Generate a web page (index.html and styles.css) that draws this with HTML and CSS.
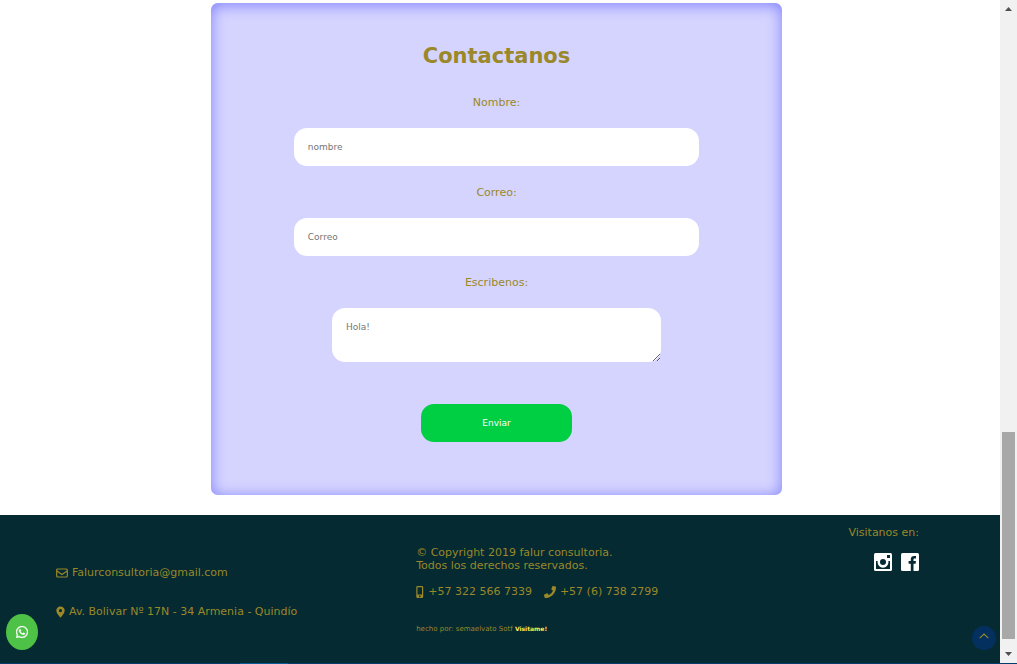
FILE: index.html
```html
<!DOCTYPE html>
<html lang="es">
<head>
  <meta charset="utf-8">
  <meta name="viewport" content="width=device-width, initial-scale=1">
  <title>Falur consultoria</title>
  <link rel="stylesheet" href="styles.css">
</head>
<body>
  <div class="window">
    <div class="page">
      <main class="content">
        <form class="contact">
          <h2 class="contact-title">Contactanos</h2>
          <label class="label" for="nombre">Nombre:</label>
          <input class="field" id="nombre" type="text" placeholder="nombre">
          <label class="label" for="correo">Correo:</label>
          <input class="field" id="correo" type="email" placeholder="Correo">
          <label class="label" for="mensaje">Escribenos:</label>
          <textarea class="field message" id="mensaje" placeholder="Hola!"></textarea>
          <button class="send" type="submit">Enviar</button>
        </form>
      </main>
      <footer class="footer">
        <address class="col place">
          <p class="line"><svg class="icon" width="12" height="12" viewBox="0 0 12 12" aria-hidden="true"><rect x="0.7" y="2" width="10.6" height="8" rx="1" fill="none" stroke="currentColor" stroke-width="1.2"/><path d="M1 4l5 3.6L11 4" fill="none" stroke="currentColor" stroke-width="1.2"/></svg>Falurconsultoria@gmail.com</p>
          <p class="line"><svg class="icon" width="9" height="12" viewBox="0 0 9 12" aria-hidden="true"><path fill="currentColor" fill-rule="evenodd" d="M4.5 0.5A4 4 0 0 1 8.7 4.6C8.7 7 6.8 8.800 4.500 11.800C2.200 8.800 0.300 7 0.300 4.600A4 4 0 0 1 4.500 0.500ZM4.500 3a1.600 1.600 0 1 0 0 3.200a1.600 1.600 0 0 0 0-3.200Z"/></svg>Av. Bolivar Nº 17N - 34 Armenia - Quindío</p>
        </address>
        <div class="col legal">
          <p>© Copyright 2019 falur consultoria.<br>Todos los derechos reservados.</p>
          <div class="phones">
            <span class="line"><svg class="icon" width="8" height="12" viewBox="0 0 8 12" aria-hidden="true"><path fill="currentColor" fill-rule="evenodd" d="M1.500 0h4.500a1.200 1.200 0 0 1 1.200 1.200v9.500a1.200 1.200 0 0 1-1.200 1.200h-4.500a1.200 1.200 0 0 1-1.200-1.200V1.200A1.200 1.200 0 0 1 1.500 0ZM1.500 1.200v7.400h4.500V1.200ZM3.750 9.500a.8.800 0 1 0 .01 0Z"/></svg>+57 322 566 7339</span>
            <span class="line"><svg class="icon" width="12" height="12" viewBox="0 0 512 512" aria-hidden="true"><path fill="currentColor" d="M493.400 24.600l-104-24c-11.300-2.600-22.900 3.300-27.500 13.900l-48 112c-4.200 9.800-1.400 21.300 6.900 28l60.600 49.600c-36 76.700-98.900 140.500-177.200 177.200l-49.600-60.600c-6.800-8.300-18.200-11.100-28-6.900l-112 48C3.900 366.500-2 378.100.600 389.400l24 104C27.100 504.200 36.700 512 48 512c256.100 0 464-207.500 464-464 0-11.200-7.700-20.900-18.600-23.400z"/></svg>+57 (6) 738 2799</span>
          </div>
          <p class="credit">hecho por: semaelvato Sotf <a class="credit-link" href="#">Visitame!</a></p>
        </div>
        <div class="col social">
          <p>Visitanos en:</p>
          <div class="social-links">
            <a class="social-link" href="#" aria-label="Instagram"><svg width="18" height="18" viewBox="0 0 18 18" aria-hidden="true"><rect width="18" height="18" rx="1.500" fill="#fff"/><path fill="#052a32" d="M2 8h2.200a5 5 0 1 0 9.600 0H16v8H2ZM13 2h3v3h-3Z"/><circle cx="9" cy="9" r="5.500" fill="#fff"/><circle cx="9" cy="9" r="3" fill="#052a32"/></svg></a>
            <a class="social-link" href="#" aria-label="Facebook"><svg width="18" height="18" viewBox="0 0 18 18" aria-hidden="true"><rect width="18" height="18" rx="1.500" fill="#fff"/><path fill="#052a32" d="M9.800 18v-7.200H7.600V8h2.200V6.400C9.800 4 11.200 3 13.200 3H15v2.500h-1.300c-.9 0-1.200.4-1.200 1.200V8h2.400l-.3 2.800h-2.100V18Z"/></svg></a>
          </div>
        </div>
      </footer>
      <a class="float whatsapp" href="#" aria-label="WhatsApp"><svg width="12" height="12" viewBox="0 0 448 448" aria-hidden="true"><path fill="currentColor" stroke="currentColor" stroke-width="12" d="M380.900 65.100C339 23.100 283.200 0 223.900 0 101.500 0 1.900 99.600 1.900 222c0 39.100 10.200 77.300 29.600 111L0 448l117.700-30.900c32.400 17.700 68.900 27 106.100 27h.1c122.300 0 224.100-99.600 224.100-222 0-59.300-25.200-115-67.100-157zm-157 341.600c-33.200 0-65.700-8.900-94-25.700l-6.700-4-69.800 18.300L72 327.200l-4.400-7c-18.500-29.400-28.200-63.300-28.200-98.200 0-101.700 82.800-184.500 184.600-184.500 49.300 0 95.600 19.200 130.400 54.100 34.800 34.900 56.200 81.200 56.100 130.500 0 101.800-84.900 184.600-186.600 184.600zm101.200-138.200c-5.500-2.800-32.800-16.200-37.900-18-5.100-1.900-8.800-2.800-12.500 2.800-3.700 5.600-14.300 18-17.600 21.800-3.200 3.700-6.500 4.200-12 1.400-32.600-16.300-54-29.100-75.500-66-5.700-9.800 5.700-9.100 16.300-30.300 1.800-3.700.9-6.900-.5-9.700-1.400-2.800-12.500-30.100-17.100-41.200-4.500-10.800-9.100-9.300-12.500-9.500-3.200-.2-6.900-.2-10.600-.2-3.700 0-9.700 1.400-14.800 6.900-5.100 5.600-19.400 19-19.400 46.300 0 27.300 19.900 53.700 22.600 57.400 2.800 3.700 39.100 59.700 94.800 83.800 35.200 15.200 49 16.500 66.600 13.900 10.700-1.600 32.800-13.400 37.400-26.400 4.600-13 4.600-24.100 3.200-26.400-1.300-2.500-5-3.900-10.500-6.600z"/></svg></a>
      <a class="float to-top" href="#" aria-label="Subir"><svg width="10" height="6" viewBox="0 0 10 6" aria-hidden="true"><path d="M.7 5.200L5 1l4.300 4.200" fill="none" stroke="currentColor" stroke-width="1.100"/></svg></a>
    </div>
    <div class="scrollbar" aria-hidden="true">
      <svg class="arrow" width="7" height="4" viewBox="0 0 7 4"><path d="M3.500 0L7 4H0Z" fill="#505050"/></svg>
      <div class="track"><div class="thumb"></div></div>
      <svg class="arrow" width="7" height="4" viewBox="0 0 7 4"><path d="M0 0h7L3.500 4Z" fill="#505050"/></svg>
    </div>
  </div>
  <div class="edge" aria-hidden="true"><div class="edge-active"></div></div>
</body>
</html>
```
FILE: styles.css
```css
* {
  box-sizing: border-box;
}

body {
  display: flex;
  flex-direction: column;
  min-height: 100vh;
  margin: 0;
  background: #fff;
  color: #9a8829;
  font-family: Verdana, "DejaVu Sans", sans-serif;
  font-size: 11px;
  line-height: 13px;
}

p {
  margin: 0;
}

.window {
  display: flex;
  flex: 1;
}

.page {
  position: relative;
  display: flex;
  flex: 1;
  flex-direction: column;
}

.content {
  padding: 3px 7px 20px 0;
}

.contact {
  display: flex;
  flex-direction: column;
  align-items: center;
  width: 57.5%;
  margin: 0 auto;
  padding: 40px 0 53px;
  border-radius: 7px;
  background: #d5d4ff;
  box-shadow: inset 0 2px 15px #8080ff;
}

.contact-title {
  margin: 0 0 26px;
  font-size: 21px;
  line-height: 27px;
}

.label {
  margin-bottom: 19px;
}

.field {
  width: 71%;
  height: 38px;
  margin: 0 0 20px;
  padding: 0 14px;
  border: 0;
  border-radius: 13px;
  background: #fff;
  font: 9px/11px Verdana, "DejaVu Sans", sans-serif;
}

.field::placeholder {
  color: #757575;
}

.message {
  width: 329px;
  max-width: 90%;
  height: 54px;
  margin-bottom: 42px;
  padding: 14px;
}

.send {
  width: 151px;
  height: 38px;
  border: 0;
  border-radius: 13px;
  background: #00ce43;
  color: #fff;
  font: 9px/11px Verdana, "DejaVu Sans", sans-serif;
}

.footer {
  display: grid;
  flex: 1;
  grid-template-columns: 5fr 6fr auto;
  align-items: start;
  padding: 11px 81px 0 56px;
  background: #052a32;
}

.col {
  display: flex;
  flex-direction: column;
  font-style: normal;
}

.place {
  gap: 26px;
  padding-top: 40px;
}

.legal {
  padding-top: 20px;
}

.line {
  display: flex;
  align-items: center;
  gap: 4px;
}

.icon {
  flex: none;
}

.phones {
  display: flex;
  flex-wrap: wrap;
  gap: 12px;
  margin: 13px 0 24px;
}

.credit {
  font-size: 7px;
}

.credit-link {
  color: #ffe94a;
  font-size: 6px;
  font-weight: bold;
  text-decoration: none;
}

.social {
  align-items: flex-end;
  gap: 14px;
}

.social-links {
  display: flex;
  gap: 9px;
}

.social-link {
  display: flex;
}

.float {
  position: absolute;
  display: flex;
  align-items: center;
  justify-content: center;
  border-radius: 50%;
}

.whatsapp {
  bottom: 13px;
  left: 6px;
  width: 32px;
  height: 36px;
  background: #4dc247;
  color: #fff;
}

.to-top {
  right: 4px;
  bottom: 13px;
  width: 24px;
  height: 24px;
  padding-bottom: 4px;
  background: #04305f;
  color: #9a8829;
}

.scrollbar {
  display: flex;
  flex-direction: column;
  align-items: center;
  width: 17px;
  padding: 7px 0;
  background: #f1f1f1;
}

.track {
  display: flex;
  flex: 1;
  flex-direction: column;
  justify-content: flex-end;
  padding-bottom: 13px;
}

.thumb {
  width: 13px;
  height: 33%;
  background: #a8a8a8;
}

.edge {
  display: flex;
  height: 1px;
  padding-left: 240px;
  background: #043c6c;
}

.edge-active {
  width: 48px;
  background: #0a5a96;
}
```
